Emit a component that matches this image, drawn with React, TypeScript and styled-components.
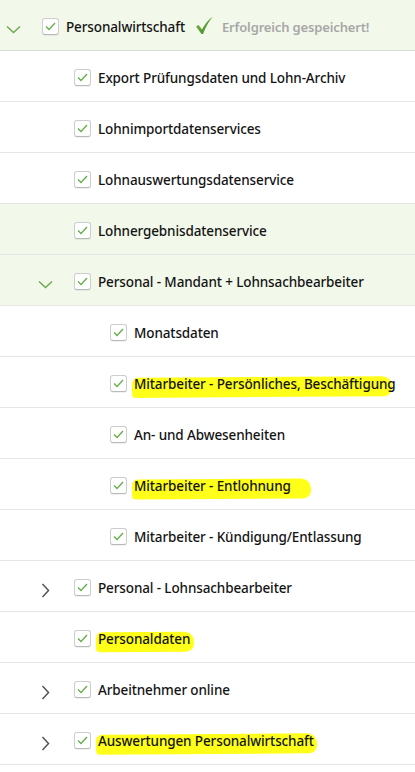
import React from "react";
import styled, { createGlobalStyle } from "styled-components";

const Global = createGlobalStyle`
  html, body { margin: 0; padding: 0; background: #ffffff; }
  body { font-family: "Noto Sans", "Open Sans", sans-serif; }
`;

const List = styled.div`
  width: 415px;
  display: flex;
  flex-direction: column;
`;

const Row = styled.div<{ $green?: boolean; $indent: number; $top?: boolean }>`
  height: 50px;
  display: flex;
  align-items: center;
  padding-left: ${(p) => p.$indent}px;
  background: ${(p) => (p.$green ? "#f2f8ea" : "#ffffff")};
  border-bottom: 1px solid ${(p) => (p.$top ? "#dcddd6" : "#e6e6e6")};
  box-sizing: content-box;
`;

const ChevronSlot = styled.div`
  width: 26px;
  height: 50px;
  margin-right: 16px;
  display: flex;
  align-items: center;
  justify-content: center;
  padding-top: 9px;
  box-sizing: border-box;
`;

const Box = styled.div`
  width: 15px;
  height: 15px;
  border: 1px solid #cdcdcd;
  border-bottom-color: #b9b9b9;
  border-radius: 3px;
  background: #ffffff;
  box-shadow: 0 1px 0 rgba(0, 0, 0, 0.06);
  display: flex;
  align-items: center;
  justify-content: center;
  margin-right: 7px;
  margin-top: 2px;
  flex: none;
`;

const Label = styled.span`
  font-size: 13.5px;
  font-weight: 500;
  color: #141414;
  white-space: nowrap;
  letter-spacing: -0.12px;
  margin-top: 3px;
`;

const Mark = styled.span<{ $extra: number }>`
  position: relative;
  z-index: 0;
  &::before {
    content: "";
    position: absolute;
    z-index: -1;
    left: -2px;
    right: ${(p) => -p.$extra}px;
    top: 2px;
    bottom: -4px;
    background: #ffff1a;
    border-radius: 6px 10px 8px 4px;
    transform: rotate(-0.4deg);
  }
`;

const Saved = styled.div`
  display: flex;
  align-items: center;
  margin-left: 10px;
  margin-top: 1px;
  gap: 8px;
`;

const SavedText = styled.span`
  font-size: 13px;
  font-weight: 600;
  color: #a7a7a7;
  white-space: nowrap;
  letter-spacing: -0.15px;
  margin-top: 2px;
`;

const ChevronDown = () => (
  <svg width="15" height="9" viewBox="0 0 15 9">
    <path d="M1 1.5 L7.5 7.5 L14 1.5" fill="none" stroke="#6aa84f" strokeWidth="1.4" />
  </svg>
);

const ChevronRight = () => (
  <svg width="9" height="15" viewBox="0 0 9 15">
    <path d="M1.5 1 L7.5 7.5 L1.5 14" fill="none" stroke="#555555" strokeWidth="1.5" />
  </svg>
);

const Check = () => (
  <svg width="11" height="9" viewBox="0 0 11 9">
    <path d="M1 4.5 L4 7.5 L10 1" fill="none" stroke="#64ad4a" strokeWidth="1.3" />
  </svg>
);

const BigCheck = () => (
  <svg width="19" height="19" viewBox="0 0 19 19">
    <defs>
      <linearGradient id="bg" x1="0" y1="0" x2="1" y2="1">
        <stop offset="0" stopColor="#7fbf4a" />
        <stop offset="1" stopColor="#3f7f2a" />
      </linearGradient>
    </defs>
    <path
      d="M1 10.5 L3.5 9 L7 13.5 C10 8 13.5 3.5 18 0.5 C14.5 4.5 11 10 8 18 L6.5 18 Z"
      fill="url(#bg)"
    />
  </svg>
);

type Item = {
  label: string;
  level: number;
  chevron?: "down" | "right";
  green?: boolean;
  mark?: number;
  saved?: boolean;
};

const items: Item[] = [
  { label: "Personalwirtschaft", level: 0, chevron: "down", green: true, saved: true },
  { label: "Export Prüfungsdaten und Lohn-Archiv", level: 1 },
  { label: "Lohnimportdatenservices", level: 1 },
  { label: "Lohnauswertungsdatenservice", level: 1 },
  { label: "Lohnergebnisdatenservice", level: 1, green: true },
  { label: "Personal - Mandant + Lohnsachbearbeiter", level: 1, chevron: "down", green: true },
  { label: "Monatsdaten", level: 2 },
  { label: "Mitarbeiter - Persönliches, Beschäftigung", level: 2, mark: -4 },
  { label: "An- und Abwesenheiten", level: 2 },
  { label: "Mitarbeiter - Entlohnung", level: 2, mark: 20 },
  { label: "Mitarbeiter - Kündigung/Entlassung", level: 2 },
  { label: "Personal - Lohnsachbearbeiter", level: 1, chevron: "right" },
  { label: "Personaldaten", level: 1, mark: 4 },
  { label: "Arbeitnehmer online", level: 1, chevron: "right" },
  { label: "Auswertungen Personalwirtschaft", level: 1, chevron: "right", mark: 3 },
];

const indents = [0, 32, 68];

export default function App() {
  return (
    <>
      <Global />
      <List>
        {items.map((it, i) => (
          <Row key={i} $green={it.green} $indent={indents[it.level]} $top={i === 0}>
            <ChevronSlot>
              {it.chevron === "down" && <ChevronDown />}
              {it.chevron === "right" && <ChevronRight />}
            </ChevronSlot>
            <Box>
              <Check />
            </Box>
            <Label>{it.mark !== undefined ? <Mark $extra={it.mark}>{it.label}</Mark> : it.label}</Label>
            {it.saved && (
              <Saved>
                <BigCheck />
                <SavedText>Erfolgreich gespeichert!</SavedText>
              </Saved>
            )}
          </Row>
        ))}
      </List>
    </>
  );
}
